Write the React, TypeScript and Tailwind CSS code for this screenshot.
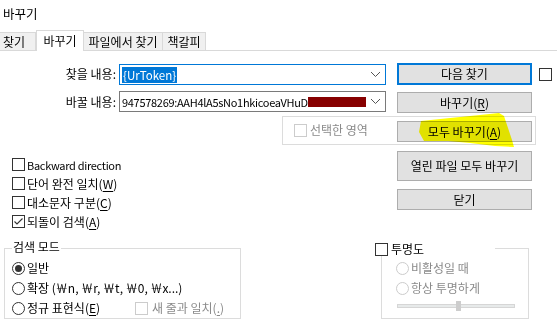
import React from 'react';

// Windows-style replace dialog (Notepad++), Korean UI

const Check = ({ checked = false, disabled = false }: { checked?: boolean; disabled?: boolean }) => (
  <span
    className={`w-[13px] h-[13px] shrink-0 border bg-white flex items-center justify-center ${
      disabled ? 'border-[#cccccc]' : 'border-[#333333]'
    }`}
  >
    {checked && (
      <svg width="11" height="11" viewBox="0 0 11 11">
        <polyline points="1.5,5.5 4,8 9.5,2.5" fill="none" stroke="#333333" strokeWidth="1.1" />
      </svg>
    )}
  </span>
);

const Radio = ({ on = false, disabled = false }: { on?: boolean; disabled?: boolean }) => (
  <span
    className={`w-[13px] h-[13px] shrink-0 rounded-full border bg-white flex items-center justify-center ${
      disabled ? 'border-[#cccccc]' : 'border-[#333333]'
    }`}
  >
    {on && <span className="w-[7px] h-[7px] rounded-full bg-[#333333]" />}
  </span>
);

const Btn = ({ children, h = 'h-[21px]' }: { children: React.ReactNode; h?: string }) => (
  <div className={`w-[135px] ${h} shrink-0 bg-[#e1e1e1] border border-[#adadad] flex items-center justify-center`}>
    {children}
  </div>
);

const Chevron = () => (
  <svg width="11" height="7" viewBox="0 0 11 7" className="shrink-0">
    <polyline points="1,1 5.5,5.5 10,1" fill="none" stroke="#555555" strokeWidth="1" />
  </svg>
);

const U = ({ children }: { children: React.ReactNode }) => <span className="underline underline-offset-2">{children}</span>;

export default function App() {
  return (
    <div className="w-[557px] h-[324px] bg-white relative overflow-hidden text-[12px] leading-[16px] text-black font-['Noto_Sans_CJK_KR',sans-serif]">
      {/* title */}
      <div className="h-[30px] pl-[3px] pt-[6px] text-[12.5px]">바꾸기</div>

      {/* tabs */}
      <div className="flex items-end h-[21px] border-b border-[#d9d9d9]">
        <div className="w-[37px] h-[18px] -ml-px bg-[#f0f0f0] border border-b-0 border-[#d9d9d9] pl-[3px] flex items-center">찾기</div>
        <div className="w-[48px] h-[21px] -mb-px bg-white border border-b-0 border-[#d9d9d9] flex items-start justify-center pt-[2px]">바꾸기</div>
        <div className="w-[79px] h-[18px] bg-[#f0f0f0] border border-l-0 border-b-0 border-[#d9d9d9] flex items-center justify-center">파일에서 찾기</div>
        <div className="w-[43px] h-[18px] bg-[#f0f0f0] border border-l-0 border-b-0 border-[#d9d9d9] flex items-center justify-center">책갈피</div>
      </div>

      {/* find row */}
      <div className="mt-[12px] flex items-start h-[22px]">
        <div className="w-[116px] text-right mt-[3px]">찾을 내용:</div>
        <div className="ml-[3px] mt-[1px] w-[267px] h-[21px] border border-[#0078d7] flex items-center pl-[2px] pr-[4px]">
          <span className="bg-[#0078d7] text-white h-[16px] px-[1px] text-[11.5px]">{'{UrToken}'}</span>
          <span className="flex-1" />
          <Chevron />
        </div>
        <div className="ml-[11px] w-[135px] h-[22px] bg-[#e1e1e1] border-2 border-[#0078d7] flex items-center justify-center">
          다음 찾기
        </div>
        <div className="ml-[7px] mt-[5px]">
          <Check />
        </div>
      </div>

      {/* replace row */}
      <div className="mt-[6px] flex items-start h-[22px]">
        <div className="w-[116px] text-right mt-[3px]">바꿀 내용:</div>
        <div className="ml-[3px] w-[267px] h-[21px] border border-[#7a7a7a] flex items-center pl-[2px] pr-[4px]">
          <span className="text-[11px] tracking-[-0.3px] whitespace-nowrap">947578269:AAH4lA5sNo1hkicoeaVHuD</span>
          <span className="w-[58px] h-[10px] bg-[#870000]" />
          <span className="flex-1" />
          <Chevron />
        </div>
        <div className="ml-[11px] mt-[1px]">
          <Btn>
            바꾸기(<U>R</U>)
          </Btn>
        </div>
      </div>

      {/* in selection */}
      <div className="mt-[3px] ml-[282px] w-[254px] h-[29px] border border-[#dcdcdc] flex items-start">
        <div className="ml-[11px] w-[103px] mt-[6px] flex items-center gap-[3px] text-[#8a8a8a]">
          <Check disabled />
          <span className="-mt-px">선택한 영역</span>
        </div>
        <div className="mt-[4px]">
          <Btn>
            모두 바꾸기(<U>A</U>)
          </Btn>
        </div>
      </div>

      {/* options + buttons */}
      <div className="mt-[6px] flex items-start">
        <div className="w-[397px] pl-[12px] pt-[4px]">
          {[
            <span key="b" className="text-[11px] tracking-[-0.3px]">Backward direction</span>,
            <span key="w">단어 완전 일치(<U>W</U>)</span>,
            <span key="c">대소문자 구분(<U>C</U>)</span>,
            <span key="a">되돌이 검색(<U>A</U>)</span>,
          ].map((label, i) => (
            <div key={i} className="h-[19px] flex items-center gap-[2px]">
              <Check checked={i === 3} />
              {label}
            </div>
          ))}
        </div>
        <div className="flex flex-col gap-[8px]">
          <Btn h="h-[30px]">열린 파일 모두 바꾸기</Btn>
          <Btn>닫기</Btn>
        </div>
      </div>

      {/* bottom groups */}
      <div className="mt-[12px] flex items-start">
        {/* search mode */}
        <div className="ml-[4px] w-[237px] relative pt-[5px]">
          <div className="h-[71px] border border-[#dcdcdc] pl-[7px] pt-[9px]">
            <div className="h-[20px] flex items-center gap-[2px]">
              <Radio on />
              <span>일반</span>
            </div>
            <div className="h-[20px] flex items-center gap-[2px]">
              <Radio />
              <span>확장 (￦n, ￦r, ￦t, ￦0, ￦x...)</span>
            </div>
            <div className="h-[20px] flex items-center">
              <Radio />
              <span className="ml-[2px] w-[108px]">
                정규 표현식(<U>E</U>)
              </span>
              <Check disabled />
              <span className="ml-[4px] text-[#8a8a8a]">
                새 줄과 일치(<U>.</U>)
              </span>
            </div>
          </div>
          <div className="absolute top-[-4px] left-[8px] px-[1px] bg-white">검색 모드</div>
        </div>

        {/* transparency */}
        <div className="ml-[134px] w-[154px] relative pt-[5px]">
          <div className="ml-[6px] w-[148px] h-[71px] border border-[#dcdcdc] pl-[14px] pt-[9px] text-[#8a8a8a]">
            <div className="h-[20px] flex items-center gap-[2px]">
              <Radio disabled />
              <span>비활성일 때</span>
            </div>
            <div className="h-[20px] flex items-center gap-[2px]">
              <Radio disabled />
              <span>항상 투명하게</span>
            </div>
            <div className="relative mt-[6px] ml-[1px] w-[118px] h-[4px] bg-[#e7eaea] border border-[#d6d6d6]">
              <div className="absolute left-[58px] top-[-4px] w-[5px] h-[10px] bg-[#cdcdcd]" />
            </div>
          </div>
          <div className="absolute top-0 left-0 w-[120px] h-[13px] bg-white flex items-center gap-[3px]">
            <Check />
            <span className="-mt-[2px]">투명도</span>
          </div>
        </div>
      </div>

      {/* highlighter mark */}
      <svg className="absolute inset-0 pointer-events-none mix-blend-multiply" width="557" height="324">
        <polygon
          points="421,121 450,118 480,115 499,113 504,116 508,128 512,140 514,147 495,146 470,143 448,141 424,141 419,132"
          fill="#ffff00"
        />
      </svg>
    </div>
  );
}
